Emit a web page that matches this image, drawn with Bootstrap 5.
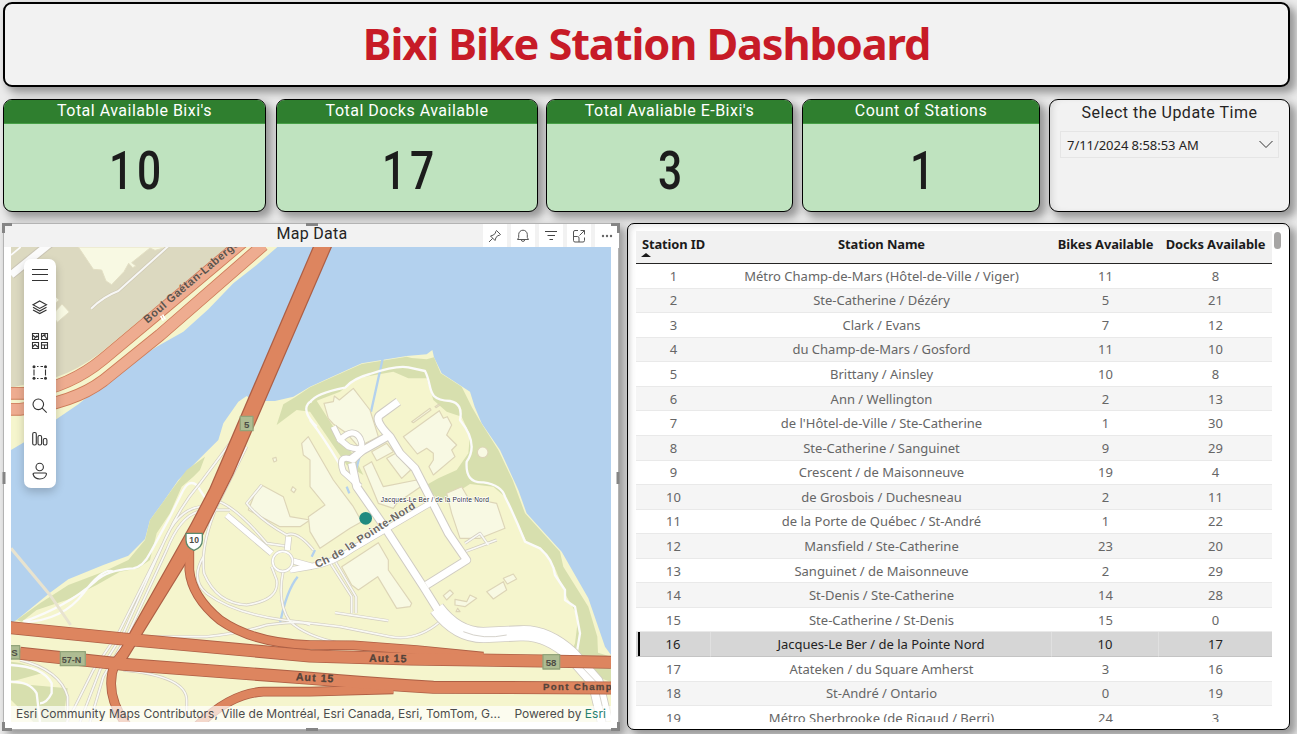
<!DOCTYPE html>
<html lang="en">
<head>
<meta charset="utf-8">
<meta name="viewport" content="width=device-width, initial-scale=1">
<title>Bixi Bike Station Dashboard</title>
<link href="https://cdn.jsdelivr.net/npm/bootstrap@5.3.0/dist/css/bootstrap.min.css" rel="stylesheet">
<style>
  :root { --din: Roboto, "Liberation Sans", sans-serif; --ui: "Noto Sans", "Open Sans", sans-serif; }
  body { background: #ebebeb; width: 1297px; height: 734px; overflow: hidden; font-family: var(--ui); color: #252423; }
  .board { padding: 2px 7px 4px 3px; height: 734px; }
  .panel { border: 1px solid #000; border-radius: 9px; box-shadow: 5px 5px 9px 1px rgba(0,0,0,.36); }
  .title-bar { height: 85px; border-width: 2px; background: #f2f2f2; margin-bottom: 12px; }
  .title-bar h1 { color: #c71b27; font-size: 43.3px; font-weight: 700; line-height: 1; white-space: nowrap; letter-spacing: -1.1px; margin-top: -2px; }
  .kpis { height: 113px; margin-bottom: 11px; }
  .kpi { background: #bfe3bf; overflow: hidden; }
  .kpi-head { background: #2f7f2f; color: #fff; height: 24px; font: 400 16px/22px var(--din); letter-spacing: .5px; border-bottom: 1px solid #47a047; }
  .kpi-num { font: 500 54.5px/1 var(--din); color: #1c1c1c; display: inline-block; transform: scaleX(.78); letter-spacing: 5px; margin-right: -5px; margin-top: 19px; }
  .w-a { width: 263px; }
  .w-b { width: 262px; margin-left: 10px; }
  .w-c { width: 247px; margin-left: 8px; }
  .w-d { width: 238px; margin-left: 9px; }
  .w-e { width: 241px; margin-left: 9px; }
  .slicer { background: #f2f2f2; padding: 0 10px; box-shadow: 5px 5px 9px 1px rgba(0,0,0,.36), inset 5px 0 7px -3px rgba(0,0,0,.12); }
  .slicer-head { font: 400 16px/26px var(--din); letter-spacing: .5px; margin-bottom: 5px; }
  .slicer-box { height: 27px; border: 1px solid #e5e5e5; padding: 3px 5px 0 6px; font-size: 13px; letter-spacing: -.05px; }
  .slicer-box svg { margin-top: -3px; }
  .low { height: 507px; }
  .map-panel { width: 616px; background: #fff; border: 1px solid #b3b3b3; position: relative; box-shadow: 5px 5px 8px 1px rgba(0,0,0,.34); }
  .map-head { height: 23px; background: #f2f2f2; font: 400 16px/20px var(--din); letter-spacing: .25px; padding-left: 2px; }
  .tools { position: absolute; right: -1px; top: 0; gap: 4px; }
  .tools span { width: 24px; height: 24px; background: #fff; display: flex; align-items: center; justify-content: center; }
  .map-body { position: relative; width: 600px; height: 475px; margin-left: 7px; overflow: hidden; }
  .map-body > svg { display: block; }
  .map-menu { position: absolute; left: 13px; top: 12px; width: 32px; height: 229px; border-radius: 7px; background: #fff; box-shadow: 0 4px 10px rgba(0,0,0,.2); }
  .credit { position: absolute; left: 0; bottom: 0; width: 600px; height: 16px; padding: 0 5px; background: rgba(255,255,255,.68); font: 400 12px/16px Inter, sans-serif; color: #4c4c4c; white-space: nowrap; }
  .credit span { color: #25806f; }
  .handles { position: absolute; left: -2px; top: -2px; pointer-events: none; }
  .data-panel { width: 663px; background: #fff; border-radius: 7px; padding: 7px 8px; box-shadow: 5px 5px 9px 1px rgba(0,0,0,.36), inset 5px 4px 6px -3px rgba(0,0,0,.1); }
  .scroll-area { height: 491px; overflow: hidden; width: 636px; }
  .stations { width: 636px; table-layout: fixed; font-size: 13px; border-collapse: separate; border-spacing: 0; margin: 0; text-align: center; }
  .stations th { height: 33px; background: #f1f1f1; border-bottom: 1px solid #252423; padding: 0; font-size: 12.9px; letter-spacing: -.1px; vertical-align: top; line-height: 26px; position: relative; color: #1b1b1b; white-space: nowrap; }
  .stations td { height: 24.57px; padding: 0; line-height: 20px; border-bottom: 1px solid #e9e9e9; color: #666; letter-spacing: 0; vertical-align: middle; white-space: nowrap; }
  .stations tbody tr:nth-child(even) td { background: #f5f5f5; }
  .stations tbody tr.picked td { background: #d6d6d6; color: #1f1f1f; border-right: 1px solid #e0e0e0; border-bottom-color: #c4c4c4; }
  .stations tbody tr.picked td:last-child { border-right: 0; }
  .stations tbody tr.picked td:first-child { box-shadow: inset 2px 0 #d6d6d6, inset 4px 0 #000; }
  .sorter { position: absolute; left: 5px; top: 22px; border: 5px solid transparent; border-top: 0; border-bottom: 4px solid #1b1b1b; }
  .thumb { width: 7px; height: 17px; border-radius: 4px; background: #a6a5a4; margin-top: 1px; margin-left: 2px; }
</style>
</head>
<body>
<main class="board">
  <header class="panel title-bar d-flex align-items-center justify-content-center"><h1 class="mb-0">Bixi Bike Station Dashboard</h1></header>

  <section class="kpis d-flex text-center">
    <div class="panel kpi w-a"><div class="kpi-head">Total Available Bixi's</div><span class="kpi-num">10</span></div>
    <div class="panel kpi w-b"><div class="kpi-head">Total Docks Available</div><span class="kpi-num">17</span></div>
    <div class="panel kpi w-c"><div class="kpi-head">Total Avaliable E-Bixi's</div><span class="kpi-num">3</span></div>
    <div class="panel kpi w-d"><div class="kpi-head">Count of Stations</div><span class="kpi-num">1</span></div>
    <div class="panel slicer w-e">
      <div class="slicer-head">Select the Update Time</div>
      <div class="slicer-box d-flex align-items-center justify-content-between"><span>7/11/2024 8:58:53 AM</span>
        <svg width="14" height="9" fill="none" stroke="#333"><path d="M.5 1 7 7.500 13.500 1"/></svg></div>
    </div>
  </section>

  <section class="low d-flex justify-content-between">
    <div class="map-panel">
      <div class="map-head text-center">Map Data</div>
      <div class="tools d-flex">
        <span><svg width="14" height="14" viewBox="0 0 14 14" fill="none" stroke="#555" stroke-linejoin="round"><path d="M8.500 1.500 12.500 5.500 11.500 6.200 9.500 6.800 7.800 9 7 11.500 2.500 7 5 6.200 7.200 4.500 7.800 2.500ZM4.700 9.300 1 13"/></svg></span>
        <span><svg width="14" height="14" viewBox="0 0 14 14" fill="none" stroke="#555" stroke-linejoin="round"><path d="M1.500 10.500 2.700 8.500V5.500a4.300 4.300 0 0 1 8.600 0V8.500L12.500 10.500ZM5.300 10.700a1.700 1.700 0 0 0 3.400 0"/></svg></span>
        <span><svg width="14" height="12" fill="none" stroke="#444"><path d="M1 1.500H13M3.500 5.500H11M5.500 9.500H9"/></svg></span>
        <span><svg width="14" height="14" viewBox="0 0 14 14" fill="none" stroke="#555"><path d="M6 1.500H3A1.500 1.500 0 0 0 1.500 3V11.500A1.500 1.500 0 0 0 3 13H11A1.500 1.500 0 0 0 12.500 11.500V8.500M1.500 7.500H5.500A1.500 1.500 0 0 1 7 9V13M7.500 6.500 12.500 1.500M8.500 1.500H12.500V5.500"/></svg></span>
        <span><svg width="12" height="4" fill="#666"><circle cx="2" cy="2" r="1.200"/><circle cx="6" cy="2" r="1.200"/><circle cx="10" cy="2" r="1.200"/></svg></span>
      </div>

      <div class="map-body">
        <svg width="600" height="475" viewBox="33 81 1800 1425" fill="none" stroke-linejoin="round">
          <defs>
            <path id="boul" d="M443 311Q500 260 560 209L735 62"/>
            <path id="pointe" d="M950 1044Q1000 1025 1050 990L1250 862"/>
          </defs>
          <rect x="33" y="81" width="1800" height="1425" fill="#b3d1ee"/>
          <!-- north bank -->
          <path fill="#f5f5cd" d="M33 81H832L770 135 700 190 625 268 550 335 470 380 400 425 300 500 235 553 170 597 100 650 33 690Z"/>
          <path fill="#dcd9c0" d="M33 81H690L450 275 300 400Q230 452 168 472L33 503Z"/>
          <path fill="#f8f9e3" stroke="#e3dfc4" stroke-width="3" d="M235 81H503L465 91 450 84 395 128 408 138 398 143 386 130 372 155 335 194 318 183 305 150 280 148ZM168 272 186 252 208 276 172 307 160 290ZM150 215 178 240 160 255Z"/>
          <path stroke="#cfc9b4" stroke-width="10" d="M273 266Q310 230 355 213L520 65"/>
          <path stroke="#f7f7f5" stroke-width="6" d="M273 266Q310 230 355 213L520 65"/>
          <path stroke="#c9c4b4" stroke-width="28" d="M33 165 150 70"/><path stroke="#fbfbfb" stroke-width="22" d="M33 165 150 70"/><path stroke="#fbfbfb" stroke-width="5" d="M33 105 62 81"/>
          <g stroke="#cd7b58" stroke-width="38"><path d="M20 520H80Q210 500 310 417L470 283 735 60"/><path d="M20 568H60Q220 550 310 482L480 345 790 75"/></g>
          <g stroke="#eeac90" stroke-width="33"><path d="M20 520H80Q210 500 310 417L470 283 735 60"/><path d="M20 568H60Q220 550 310 482L480 345 790 75"/></g>
          <path stroke="#fff" stroke-width="5" d="M482 288 490 302M488 284 496 298"/>

          <!-- south bank -->
          <path fill="#f5f5cd" d="M33 1210 50 1200 150 1118 205 1078 310 1035 385 1007 435 957 450 900 490 845 535 780 600 715 655 660 670 610 715 545 740 528 762 543 825 543 880 530 930 500 1085 430 1220 408 1280 403 1297 390 1302 412 1325 460 1410 515 1424 560 1445 610 1500 690 1555 810 1580 880 1685 995 1765 1135 1815 1280 1833 1305V1506H33Z"/>
          <g fill="#d7dfae">
            <path d="M830 615 850 553 885 532 930 502 1085 432 1220 410 1235 414 1280 418 1302 412 1322 460 1385 500 1415 560 1438 600 1495 690 1538 780 1575 880 1680 995 1690 1040 1765 1160 1792 1250 1794 1298 1833 1310V1385L1770 1365 1700 1330 1725 1270 1735 1190 1700 1130 1665 1045 1625 985 1580 965 1515 830 1480 800 1410 792 1350 830 1320 840 1270 800 1315 775 1370 750 1405 700 1410 645 1385 590 1340 575 1300 540 1280 475 1225 475 1180 455 1070 475 1020 515 950 542 1000 620 1060 705 1090 765 1040 735 930 575 890 570Z"/>
            <path d="M515 810 560 750 615 710 600 750 580 770 545 800 510 880 470 940 450 1020 415 1045 360 1055 290 1095 200 1140 110 1170 65 1205 50 1200 120 1150 205 1095 310 1055 385 1020 435 960 450 900 490 845Z"/>
            <path d="M33 1325Q90 1330 125 1360L33 1385ZM33 1390 203 1405 195 1460 200 1506H100L33 1440Z"/>
          </g>
          <!-- creeks -->
          <path stroke="#b3d1ee" stroke-width="7" d="M1149 412 1113 575M1080 705 1060 780M1040 800 1048 820M945 990 935 1010M893 1070Q860 1110 840 1210"/>
          <!-- buildings -->
          <g fill="#f8f9e3" stroke="#ddd5b7" stroke-width="3.500">
            <path d="M972 550 1000 545 1003 528 1018 540 1060 505 1110 570 1135 650 1075 680 1040 640 1000 612 985 595Z"/>
            <path d="M1210 650 1318 572 1330 595 1342 590 1355 615 1340 645 1370 675 1355 690 1365 710 1300 765 1287 740 1300 720 1300 700 1280 685 1252 702Z"/>
            <path d="M1235 605 1290 565 1293 570 1240 608ZM1305 560 1317 552 1319 556 1308 563Z"/>
            <path d="M1115 695 1160 670 1180 695 1130 722ZM1160 715 1190 698 1232 750 1205 775ZM1090 740 1115 725 1150 800 1250 780 1262 800 1190 850 1180 865 1135 850Z"/>
            <path d="M1340 820 1385 800 1405 835 1440 840 1490 850 1515 925 1440 955 1380 955 1355 880Z"/>
            <path d="M1025 1040 1135 968 1165 1020 1165 1050 1235 1150 1230 1160 1190 1165 1133 1070 1075 1110 1055 1095Z"/>
            <path d="M745 870 765 820 785 795 850 830 870 890 930 900 900 920 840 920Z"/>
            <path d="M905 670 925 650 1000 780 1060 860 1085 905 1050 925 960 985 930 935 925 890 975 855 930 800 930 720 910 705Z"/>
            <path d="M1460 1115 1510 1085 1520 1110 1480 1137ZM1510 1075 1540 1062 1550 1077 1522 1092ZM1330 1127 1350 1110 1360 1120 1340 1140ZM1365 1138 1400 1145 1410 1125 1430 1135 1395 1160 1365 1155Z"/>
            <circle cx="1448" cy="697" r="16"/><path d="M818 715 828 712 830 722 822 726ZM878 800 888 808 882 818 873 811ZM1373 1165 1380 1175 1368 1175Z"/>
          </g>
          <!-- trails -->
          <g stroke="#fbfbfa" stroke-width="7">
            <path d="M930 600Q970 650 1020 735M930 548Q945 520 1035 503Q1060 475 1110 462Q1190 435 1225 442L1275 453C1300 500 1275 540 1350 543Q1390 550 1380 600C1420 650 1425 690 1400 725Q1395 790 1450 787Q1505 795 1515 830Q1545 890 1575 965L1620 985Q1660 1020 1665 1065L1695 1110V1140L1725 1160 1740 1240 1730 1300"/>
            <path d="M615 833 590 795Q565 775 545 820L510 890 450 1000Q430 1040 400 1045Q320 1050 285 1085Q200 1160 70 1205M70 1207 Q190 1200 250 1120 T340 1055"/>
            <path d="M33 1335Q130 1340 155 1390V1420Q140 1450 120 1450M33 1385Q90 1385 110 1420L120 1506"/>
            <path d="M930 545Q900 570 950 620"/>
          </g>
          <path stroke="#e8e3cf" stroke-width="9" d="M33 985 150 1125 212 1215"/>
          <!-- slip roads: casing, then surface -->
          <g stroke="#d2cdc0" stroke-width="9">
            <path d="M705 650 600 790Q540 860 500 950L355 1240 280 1350 225 1460 200 1506M740 680 650 860Q600 980 612 1060Q650 1150 740 1155Q840 1140 830 1080L815 1040M600 860Q530 870 490 970L370 1240 300 1350 240 1506M595 875Q540 890 500 990L385 1240 310 1370 270 1506M610 1010Q570 1080 620 1120Q700 1180 850 1200L1020 1220 1170 1250Q1250 1265 1320 1205M430 1250H620Q720 1240 800 1215 900 1200 930 1215M850 1050Q830 1150 870 1205Q920 1250 1020 1270M60 1320Q180 1350 203 1430V1506M370 1350Q560 1370 560 1440V1500M785 795 740 850Q780 900 860 945Q890 930 940 990M640 840Q700 850 800 970L870 980M640 870H690M1005 1178 1165 1202M985 1020 1055 1130V1180M1000 1015 1068 1130V1180M1395 970 1440 940 1465 975M1395 995 1490 960"/>
          </g>
          <g stroke="#f9f9f5" stroke-width="5">
            <path d="M705 650 600 790Q540 860 500 950L355 1240 280 1350 225 1460 200 1506M740 680 650 860Q600 980 612 1060Q650 1150 740 1155Q840 1140 830 1080L815 1040M600 860Q530 870 490 970L370 1240 300 1350 240 1506M595 875Q540 890 500 990L385 1240 310 1370 270 1506M610 1010Q570 1080 620 1120Q700 1180 850 1200L1020 1220 1170 1250Q1250 1265 1320 1205M430 1250H620Q720 1240 800 1215 900 1200 930 1215M850 1050Q830 1150 870 1205Q920 1250 1020 1270M60 1320Q180 1350 203 1430V1506M370 1350Q560 1370 560 1440V1500M785 795 740 850Q780 900 860 945Q890 930 940 990M640 840Q700 850 800 970L870 980M640 870H690M1005 1178 1165 1202M985 1020 1055 1130V1180M1000 1015 1068 1130V1180M1395 970 1440 940 1465 975M1395 995 1490 960"/>
          </g>
          <!-- local streets -->
          <g stroke="#cfcbc2">
            <path stroke-width="27" d="M1195 545 1140 585Q1120 600 1170 650L1200 700 1245 745 1345 940 1400 1020 1280 1095M1170 645 1090 690 1050 720M1055 730 1070 800 1150 915 1270 1100 1320 1180"/>
            <path stroke-width="21" d="M1000 620 1020 660Q1060 620 1080 655 1100 700 1045 680L1015 655M1090 690 1060 720Q1010 700 1030 755L1080 800"/>
            <path stroke-width="20" d="M870 1050 930 1040Q1000 1030 1060 985L1290 850M875 1022 940 1040M680 885 815 1000M862 990 866 950"/>
            <path stroke-width="48" d="M1310 1165Q1370 1245 1450 1245L1560 1240Q1640 1235 1715 1305L1787 1387 1815 1506"/>
          </g>
          <g stroke="#fff">
            <path stroke-width="21" d="M1195 545 1140 585Q1120 600 1170 650L1200 700 1245 745 1345 940 1400 1020 1280 1095M1170 645 1090 690 1050 720M1055 730 1070 800 1150 915 1270 1100 1320 1180"/>
            <path stroke-width="16" d="M1000 620 1020 660Q1060 620 1080 655 1100 700 1045 680L1015 655M1090 690 1060 720Q1010 700 1030 755L1080 800"/>
            <path stroke-width="16" d="M870 1050 930 1040Q1000 1030 1060 985L1290 850M875 1022 940 1040M680 885 815 1000M862 990 866 950"/>
            <path stroke-width="43" d="M1310 1165Q1370 1245 1450 1245L1560 1240Q1640 1235 1715 1305L1787 1387 1815 1506"/>
          </g>
          <path stroke="#d5d2cb" stroke-width="3" d="M1390 1235Q1450 1260 1520 1245M1740 1335 1790 1387 1818 1506"/>
          <circle cx="848" cy="1024" r="30" fill="#f5f5cd" stroke="#d5d2cb" stroke-width="9"/><circle cx="848" cy="1024" r="30" stroke="#fff" stroke-width="5"/>
          <!-- highways -->
          <g stroke="#ad5f45">
            <path stroke-width="29" d="M568 985V1050Q575 1130 660 1200 760 1270 930 1275L1060 1276 1250 1290 1450 1310M390 1270 345 1330Q310 1420 380 1515M590 1520Q690 1420 790 1415H930L1180 1408"/>
            <path fill="#ad5f45" stroke="none" d="M938 81H996L700 765 602 960 365 1345H328L570 915 628 805Z"/>
            <path stroke-width="39" d="M20 1222 370 1257 930 1308 1230 1317 1630 1323 1833 1327M60 1300 370 1333 930 1375Q1100 1390 1300 1402L1833 1404"/>
          </g>
          <g stroke="#dd855f">
            <path stroke-width="24" d="M568 985V1050Q575 1130 660 1200 760 1270 930 1275L1060 1276 1250 1290 1450 1310M390 1270 345 1330Q310 1420 380 1515M590 1520Q690 1420 790 1415H930L1180 1408"/>
            <path fill="#dd855f" stroke="none" d="M942 81H992L696 765 598 960 361 1345H332L574 915 632 805Z"/>
            <path stroke-width="34" d="M20 1222 370 1257 930 1308 1230 1317 1630 1323 1833 1327M60 1300 370 1333 930 1375Q1100 1390 1300 1402L1833 1404"/>
          </g>
          <!-- road numbers and names -->
          <g font-family="Liberation Sans" font-weight="700" fill="#4d4d45">
            <g fill="#aebc92" stroke="#92a47a" stroke-width="4"><rect x="721" y="589" width="38" height="43"/><rect x="181" y="1295" width="75" height="42"/><rect x="20" y="1277" width="39" height="40"/><rect x="1629" y="1304" width="50" height="43"/></g>
            <g font-size="29"><text x="732" y="623">5</text><text x="185" y="1329" font-size="27">57-N</text><text x="34" y="1309">S</text><text x="1637" y="1338">58</text></g>
            <path fill="#fff" stroke="#5b8a6d" stroke-width="4" d="M558 940H607V960Q607 982 582 991 558 982 558 960Z"/>
            <text x="568" y="970" font-size="26">10</text>
            <g font-size="32" fill="#54433a" stroke="#54433a" stroke-width=".8">
              <text transform="translate(1107 1325) rotate(1)" textLength="112">Aut 15</text>
              <text transform="translate(887 1381) rotate(3)" textLength="113">Aut 15</text>
              <text x="1629" y="1410" font-size="29" textLength="206">Pont Champ</text></g>
            <g fill="#5d534b" stroke="#e9b9a0" stroke-width="2" paint-order="stroke" font-size="33" letter-spacing="1.600"><text><textPath href="#boul">Boul Gaétan-Laberge</textPath></text></g>
            <g fill="#6b6761" stroke="#fff" stroke-width="3" paint-order="stroke" font-size="33" letter-spacing="1.200"><text><textPath href="#pointe">Ch de la Pointe-Nord</textPath></text></g>
          </g>
          <circle cx="1097" cy="895" r="19" fill="#208a80"/>
          <text x="1142" y="846" font-family="Liberation Sans" font-size="20" fill="#2d2d33" stroke="#fff" stroke-width="4" paint-order="stroke" textLength="325">Jacques-Le Ber / de la Pointe Nord</text>
        </svg>

        <div class="map-menu">
          <svg width="32" height="229" viewBox="24 259 32 229" fill="none" stroke="#333" stroke-width="1.100">
            <path d="M32 269.500H48M32 274.500H48M32 280.500H48"/>
            <path d="M39.700 301 46.500 304.700 39.700 308.400 33 304.700ZM33 307.300 39.700 311 46.500 307.300M33 309.900 39.700 313.600 46.500 309.900"/>
            <path d="M32.500 333.500H38.500V339.500H32.500ZM41.500 333.500H47.500V339.500H41.500ZM32.500 342.500H38.500V348.500H32.500ZM41.500 342.500H47.500V348.500H41.500ZM32.500 335 35.500 337.500 38.500 336M34 339 37 335.500M41.500 337 44 335 47 339M45 334V337M32.500 347 35 344.500 38.500 347.500M42 345H47M44.500 345V348"/>
            <path d="M37 366.500H38.500M40.500 366.500H43M37 378.500H38.500M40.500 378.500H43M34 369.500V375.500M45.500 369.500V375.500"/>
            <g fill="#333" stroke="none"><circle cx="34" cy="366.700" r="1.500"/><circle cx="45.500" cy="366.700" r="1.500"/><circle cx="34" cy="378.300" r="1.500"/><circle cx="45.500" cy="378.300" r="1.500"/></g>
            <circle cx="38.300" cy="404.300" r="5.300"/><path d="M42.200 408.200 46.700 412.700"/>
            <rect x="32.700" y="432.500" width="3.600" height="12.500" rx="1.500"/><rect x="38" y="435.500" width="3.600" height="9.500" rx="1.500"/><rect x="43.300" y="438.500" width="3.600" height="6.500" rx="1.500"/>
            <circle cx="39.700" cy="467" r="3.700"/><path d="M34.500 473H45.500Q46.500 473 46.500 474 45.500 479 39.700 479 34.500 479 33 474 33 473 34.500 473Z"/>
          </svg>
        </div>
        <div class="credit d-flex justify-content-between"><div>Esri Community Maps Contributors, Ville de Montréal, Esri Canada, Esri, TomTom, G...</div><div>Powered by <span>Esri</span></div></div>
      </div>
      <svg class="handles" width="618" height="510" viewBox="2 221 618 510" fill="none" stroke="#858585" stroke-width="3">
        <path d="M3.500 232V223.500H12M611 223.500H618.500V232M3.500 721V728.500H12M611 728.500H618.500V721M306 223.500H318M306 728.500H318M4 471V483M618 471V483"/>
      </svg>
    </div>

    <div class="panel data-panel d-flex align-items-start">
      <div class="scroll-area">
        <table class="stations">
          <colgroup><col style="width:75px"><col style="width:341px"><col style="width:107px"><col style="width:113px"></colgroup>
          <thead><tr><th>Station ID<i class="sorter"></i></th><th>Station Name</th><th>Bikes Available</th><th>Docks Available</th></tr></thead>
          <tbody>
            <tr><td>1</td><td>Métro Champ-de-Mars (Hôtel-de-Ville / Viger)</td><td>11</td><td>8</td></tr>
            <tr><td>2</td><td>Ste-Catherine / Dézéry</td><td>5</td><td>21</td></tr>
            <tr><td>3</td><td>Clark / Evans</td><td>7</td><td>12</td></tr>
            <tr><td>4</td><td>du Champ-de-Mars / Gosford</td><td>11</td><td>10</td></tr>
            <tr><td>5</td><td>Brittany / Ainsley</td><td>10</td><td>8</td></tr>
            <tr><td>6</td><td>Ann / Wellington</td><td>2</td><td>13</td></tr>
            <tr><td>7</td><td>de l'Hôtel-de-Ville / Ste-Catherine</td><td>1</td><td>30</td></tr>
            <tr><td>8</td><td>Ste-Catherine / Sanguinet</td><td>9</td><td>29</td></tr>
            <tr><td>9</td><td>Crescent / de Maisonneuve</td><td>19</td><td>4</td></tr>
            <tr><td>10</td><td>de Grosbois / Duchesneau</td><td>2</td><td>11</td></tr>
            <tr><td>11</td><td>de la Porte de Québec / St-André</td><td>1</td><td>22</td></tr>
            <tr><td>12</td><td>Mansfield / Ste-Catherine</td><td>23</td><td>20</td></tr>
            <tr><td>13</td><td>Sanguinet / de Maisonneuve</td><td>2</td><td>29</td></tr>
            <tr><td>14</td><td>St-Denis / Ste-Catherine</td><td>14</td><td>28</td></tr>
            <tr><td>15</td><td>Ste-Catherine / St-Denis</td><td>15</td><td>0</td></tr>
            <tr class="picked"><td>16</td><td>Jacques-Le Ber / de la Pointe Nord</td><td>10</td><td>17</td></tr>
            <tr><td>17</td><td>Atateken / du Square Amherst</td><td>3</td><td>16</td></tr>
            <tr><td>18</td><td>St-André / Ontario</td><td>0</td><td>19</td></tr>
            <tr><td>19</td><td>Métro Sherbrooke (de Rigaud / Berri)</td><td>24</td><td>3</td></tr>
          </tbody>
        </table>
      </div>
      <div class="thumb"></div>
    </div>
  </section>
</main>
<script src="https://cdn.jsdelivr.net/npm/bootstrap@5.3.0/dist/js/bootstrap.bundle.min.js"></script>
</body>
</html>
